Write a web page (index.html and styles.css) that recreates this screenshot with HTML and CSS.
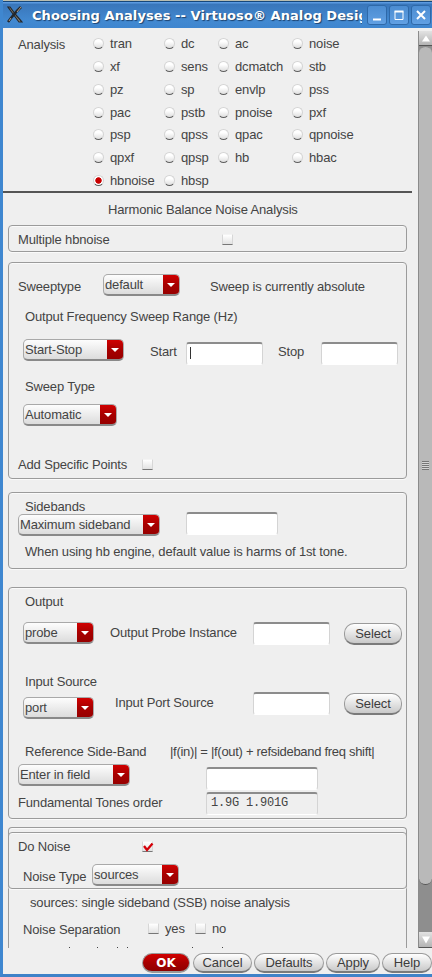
FILE: index.html
```html
<!DOCTYPE html>
<html lang="en">
<head>
<meta charset="utf-8">
<title>Choosing Analyses</title>
<link rel="stylesheet" href="styles.css">
</head>
<body>
<div class="window">
  <header class="titlebar">
    <svg class="logo" width="16" height="17" viewBox="0 0 16 17"><path d="M1 1L3 1L9 9L15 16L12 16L6 8Z" fill="#8f8878" stroke="#25282c" stroke-width="1.2"/><path d="M14 1L10 5L4 12L1 16" fill="none" stroke="#22272d" stroke-width="2.6"/><path d="M14 1L10 6M4 12L2 15" stroke="#b49c83" stroke-width="1"/></svg>
    <h1 class="title">Choosing Analyses -- Virtuoso® Analog Desig</h1>
    <div class="controls">
      <span class="control"><svg width="20" height="20"><path d="M6 14.5H14" stroke="#fff" stroke-width="2"/></svg></span>
      <span class="control"><svg width="20" height="20"><path d="M6 6.5H14V14.5H6Z" fill="none" stroke="#fff"/><path d="M5.5 6.5H14.5" stroke="#fff" stroke-width="2"/></svg></span>
      <span class="control"><svg width="20" height="20"><path d="M6 6L14 14M14 6L6 14" stroke="#fff" stroke-width="2"/></svg></span>
    </div>
  </header>

  <div class="body">
    <main class="content">
      <section class="analysis">
        <span class="analysis-label">Analysis</span>
        <div class="radios">
          <label><i class="radio"></i>tran</label><label><i class="radio"></i>dc</label><label><i class="radio"></i>ac</label><label><i class="radio"></i>noise</label>
          <label><i class="radio"></i>xf</label><label><i class="radio"></i>sens</label><label><i class="radio"></i>dcmatch</label><label><i class="radio"></i>stb</label>
          <label><i class="radio"></i>pz</label><label><i class="radio"></i>sp</label><label><i class="radio"></i>envlp</label><label><i class="radio"></i>pss</label>
          <label><i class="radio"></i>pac</label><label><i class="radio"></i>pstb</label><label><i class="radio"></i>pnoise</label><label><i class="radio"></i>pxf</label>
          <label><i class="radio"></i>psp</label><label><i class="radio"></i>qpss</label><label><i class="radio"></i>qpac</label><label><i class="radio"></i>qpnoise</label>
          <label><i class="radio"></i>qpxf</label><label><i class="radio"></i>qpsp</label><label><i class="radio"></i>hb</label><label><i class="radio"></i>hbac</label>
          <label><i class="radio on"></i>hbnoise</label><label><i class="radio"></i>hbsp</label>
        </div>
      </section>
      <h2 class="heading">Harmonic Balance Noise Analysis</h2>

      <section class="panel multiple">
        <div class="row r-multiple"><span>Multiple hbnoise</span><i class="check"></i></div>
      </section>

      <section class="panel sweep">
        <div class="row r-sweeptype"><span>Sweeptype</span><div class="select"><b>default</b><i class="arrow"></i></div><span class="status">Sweep is currently absolute</span></div>
        <div class="row r-range-title"><span>Output Frequency Sweep Range (Hz)</span></div>
        <div class="row r-range"><div class="select"><b>Start-Stop</b><i class="arrow"></i></div><span>Start</span><div class="field"><i class="caret"></i></div><span>Stop</span><div class="field"></div></div>
        <div class="row r-type-title"><span>Sweep Type</span></div>
        <div class="row r-type"><div class="select"><b>Automatic</b><i class="arrow"></i></div></div>
        <div class="row r-points"><span>Add Specific Points</span><i class="check"></i></div>
      </section>

      <section class="panel sidebands">
        <div class="row r-side-title"><span>Sidebands</span></div>
        <div class="row r-side"><div class="select"><b>Maximum sideband</b><i class="arrow"></i></div><div class="field"></div></div>
        <div class="row r-side-note"><span>When using hb engine, default value is harms of 1st tone.</span></div>
      </section>

      <section class="panel ports">
        <div class="row r-out-title"><span>Output</span></div>
        <div class="row r-out"><div class="select"><b>probe</b><i class="arrow"></i></div><span>Output Probe Instance</span><div class="field"></div><button class="btn">Select</button></div>
        <div class="row r-in-title"><span>Input Source</span></div>
        <div class="row r-in"><div class="select"><b>port</b><i class="arrow"></i></div><span>Input Port Source</span><div class="field"></div><button class="btn">Select</button></div>
        <div class="row r-ref-title"><span>Reference Side-Band</span><span class="formula">|f(in)| = |f(out) + refsideband freq shift|</span></div>
        <div class="row r-ref"><div class="select"><b>Enter in field</b><i class="arrow"></i></div><div class="field"></div></div>
        <div class="row r-fund"><span>Fundamental Tones order</span><div class="field readonly">1.9G 1.901G</div></div>
      </section>

      <section class="panel noise">
        <div class="panel inner">
          <div class="row r-do"><span>Do Noise</span><i class="check"><svg width="12" height="12"><path d="M2 5L5 9L10.5 2.5" fill="none" stroke="#d40008" stroke-width="2.3"/></svg></i></div>
          <div class="row r-ntype"><span>Noise Type</span><div class="select"><b>sources</b><i class="arrow"></i></div></div>
        </div>
        <div class="row r-desc"><span>sources: single sideband (SSB) noise analysis</span></div>
        <div class="row r-sep"><span>Noise Separation</span><i class="check"></i><span>yes</span><i class="check"></i><span>no</span></div>
        <svg class="clipped" width="240" height="1"><path d="M60 .5h1M88 .5h1M108 .5h1M118 .5h1M183 .5h1M213 .5h1" stroke="#444"/></svg>
      </section>
    </main>

    <aside class="scrollbar">
      <div class="step up"><svg width="13" height="14"><path d="M3 10.5L7 4.5L11 10.5Z" fill="#fff"/></svg></div>
      <div class="track"><div class="thumb"><i class="grip"></i></div></div>
      <div class="step down"><svg width="13" height="15"><path d="M3 4.5H11L7 11.5Z" fill="#fff"/></svg></div>
    </aside>
  </div>

  <footer class="actions">
    <button class="btn ok">OK</button><button class="btn cancel">Cancel</button><button class="btn defaults">Defaults</button><button class="btn apply">Apply</button><button class="btn help">Help</button>
  </footer>
</div>
</body>
</html>
```

FILE: styles.css
```css
* { box-sizing: border-box; }
body { margin: 0; }
i, b { font-style: normal; font-weight: normal; display: block; }
svg { display: block; }

.window {
  width: 432px; height: 977px; overflow: hidden;
  display: flex; flex-direction: column;
  background: #efefef;
  border-left: 3px solid #3f87d0; border-bottom: 3px solid #3f82c8;
  font: 13px/16px "Liberation Sans", Arial, sans-serif;
  letter-spacing: -.15px; color: #444; white-space: nowrap;
}

/* title bar */
.titlebar {
  height: 28px; flex: none; margin-left: -3px; padding: 3px 1px 0 7px;
  display: flex; align-items: flex-start;
  border-top: 1px solid #b9bdb0;
  background: linear-gradient(#16477a 0 1px, #5b9ae0 1px 2px, #3976ba 3px, #4289d1 20px, #3f86cf);
}
.logo { margin-top: 2px; flex: none; }
.title {
  margin: 3px 0 0 9px; width: 330px; overflow: hidden; flex: none;
  font: bold 13px/17px "DejaVu Sans", sans-serif; letter-spacing: .07px;
  color: #fff; text-shadow: 1px 1px 1px #1c416d;
}
.controls { display: flex; gap: 2px; margin: 1px 0 0 5px; }
.control {
  width: 20px; height: 20px; border-radius: 3px;
  background: linear-gradient(#4a8bd0, #62a1e4); box-shadow: inset 0 0 0 1px #2e69a9;
}

.body { display: flex; height: 920px; flex: none; }
.content { width: 415px; height: 920px; overflow: hidden; }

/* analysis chooser */
.analysis { display: flex; width: 409px; height: 165px; border-bottom: 2px solid #555; padding: 8px 0 0 15px; }
.analysis-label { width: 75px; padding-top: 1px; }
.radios { display: grid; grid-template-columns: 71px 54px 74px 80px; grid-template-rows: 23px 23px 23px 22px 23px 23px 16px; }
.radios label { display: flex; gap: 6px; height: 16px; }
.radio {
  width: 11px; height: 11px; margin-top: 2px; border-radius: 50%;
  background: linear-gradient(#fff 30%, #dedede); border: 1px solid #d4d4d4; border-bottom-color: #606060;
}
.radio.on { background: radial-gradient(circle, #c80000 0 2.8px, #fff 3.6px); }
.heading { margin: 9px 0 0 105px; font: inherit; height: 16px; }

/* panels and their rows */
.panel {
  margin-left: 5px; width: 399px; border: 1px solid #9b9b9b; border-radius: 4px;
  box-shadow: 0 1px 0 #fafafa, inset 0 1px 0 #fafafa;
}
.row { display: grid; align-items: start; justify-content: start; }
.multiple { margin-top: 7px; height: 27px; padding: 6px 0 0 9px; }
.r-multiple { grid-template-columns: 204px 12px; }
.r-multiple .check { margin-top: 2px; }

.sweep { margin-top: 10px; height: 217px; padding-top: 11px; }
.r-sweeptype { padding-left: 9px; grid-template-columns: 85px 77px; grid-auto-flow: column; height: 35px; }
.r-sweeptype span { margin-top: 5px; }
.r-sweeptype .status { padding-left: 30px; }
.r-range-title { padding-left: 16px; height: 30px; }
.r-range { padding-left: 14px; height: 40px; grid-template-columns: 127px 36px 92px 43px 77px; }
.r-range .select { width: 101px; }
.r-range span { margin-top: 5px; }
.r-range .field { margin-top: 3px; width: 77px; }
.r-type-title { padding-left: 16px; height: 25px; }
.r-type { padding-left: 14px; height: 53px; grid-template-columns: 94px; }
.r-points { padding-left: 9px; grid-template-columns: 124px 12px; }
.r-points .check { margin-top: 2px; }

.sidebands { margin-top: 13px; height: 77px; padding-top: 6px; }
.r-side-title { padding-left: 16px; height: 13px; }
.r-side { padding-left: 9px; height: 32px; grid-template-columns: 142px 92px; column-gap: 26px; }
.r-side .select { margin-top: 2px; }
.r-side-note { padding-left: 16px; }

.ports { margin-top: 18px; height: 232px; padding-top: 6px; }
.r-out-title, .r-in-title { padding-left: 16px; }
.r-out-title { height: 28px; }
.r-out { padding-left: 14px; height: 52px; grid-template-columns: 87px 143px 91px 58px; }
.r-out .select, .r-in .select { width: 71px; }
.r-out .field, .r-in .field { width: 77px; }
.r-out span { margin-top: 3px; }
.r-out .btn, .r-in .btn { margin-top: 1px; }
.r-in-title { height: 18px; }
.r-in { padding-left: 14px; height: 52px; grid-template-columns: 92px 138px 91px 58px; }
.r-in .select { margin-top: 5px; }
.r-in span { margin-top: 3px; }
.r-ref-title { padding-left: 16px; height: 20px; grid-template-columns: 145px auto; }
.formula { letter-spacing: -.3px; }
.r-ref { padding-left: 9px; height: 28px; grid-template-columns: 112px 112px; column-gap: 76px; }
.r-ref .field { margin-top: 3px; }
.r-fund { padding-left: 9px; grid-template-columns: 188px 112px; }
.r-fund span { margin-top: 3px; }

.noise { margin-top: 8px; height: 121px; border-bottom: 0; border-radius: 4px 4px 0 0; box-shadow: inset 0 1px 0 #fafafa; }
.inner { margin: 4px 0 0 -1px; height: 57px; padding-top: 6px; }
.r-do { padding-left: 9px; height: 25px; grid-template-columns: 124px 12px; }
.r-do .check { margin-top: 2px; }
.r-ntype { padding-left: 14px; grid-template-columns: 69px 87px; }
.r-ntype span { margin-top: 5px; }
.r-desc { padding-left: 21px; margin-top: 6px; height: 27px; }
.r-sep { padding-left: 14px; height: 25px; grid-template-columns: 125px 17px 30px 17px auto; }
.r-sep .check { margin-top: 1px; }
.r-sep .check + span { margin-top: -1px; }

/* form controls */
.check {
  width: 11px; height: 11px; background: linear-gradient(#fff, #e2e2e2);
  border: 1px solid #d7d7d7; border-top-color: #f4f4f4; border-bottom-color: #777;
}
.check svg { margin: -1px; }
.select {
  height: 22px; display: flex; justify-content: space-between; overflow: hidden;
  border: 1px solid #a9a9a9; border-bottom: 2px solid #898989; border-radius: 5px;
  background: linear-gradient(#fdfdfd, #dcdcdc);
}
.select b { margin: 2px 0 0 1px; }
.arrow { width: 16px; flex: none; background: linear-gradient(#d00000, #a80000 50%, #970000); padding: 8px 0 0 4px; }
.arrow::before { content: ""; display: block; width: 8px; height: 4px; background: #fff; clip-path: polygon(0 0, 100% 0, 50% 100%); }
.field {
  height: 23px; background: #fff; border: 1px solid #d4d4d4;
  border-top: 2px solid #8c8c8c; border-bottom-color: #fff; border-radius: 3px;
}
.readonly { background: #efefef; padding: 1px 0 0 4px; font: 12px/16px "Liberation Mono", monospace; letter-spacing: -.2px; }
.caret { width: 1px; height: 12px; margin: 3px 0 0 3px; background: #333; }
.btn {
  height: 22px; padding: 0; border: 1px solid #9a9a9a; border-bottom: 2px solid #7a7a7a; border-radius: 10px;
  background: linear-gradient(#fff, #e4e4e4 50%, #c9c9c9);
  font: inherit; letter-spacing: -.1px; color: #3c3c3c; text-align: center;
}

/* scroll bar */
.scrollbar { width: 14px; height: 917px; margin-top: 3px; display: flex; flex-direction: column; border-left: 1px solid #8b8b8b; }
.step { background: linear-gradient(#e2e2e2, #b4b4b4); border-bottom: 1px solid #555; }
.up { height: 15px; }
.down { height: 16px; }
.track { flex: 1; background: #8e8e8e; }
.thumb { height: 839px; border-radius: 7px; border: 1px solid #8b8b8b; border-width: 1px 0; border-bottom-color: #555; background: #b9b9b9; display: flex; align-items: center; justify-content: center; }
.grip { width: 7px; height: 9px; background: repeating-linear-gradient(#777 0 1px, #d5d5d5 1px 2px); }

/* action buttons */
.actions { display: flex; gap: 2px; padding: 5px 0 0 139px; height: 26px; }
.actions .btn { height: 20px; flex: none; line-height: 16px; }
.actions .ok { width: 48px; margin-right: 1px; background: linear-gradient(#d20000, #a80000 50%, #8f0000); border-color: #999; color: #fff; font: bold 12px/16px "DejaVu Sans", sans-serif; }
.cancel { width: 59px; }
.defaults { width: 70px; }
.apply { width: 54px; }
.help { width: 50px; }
```
